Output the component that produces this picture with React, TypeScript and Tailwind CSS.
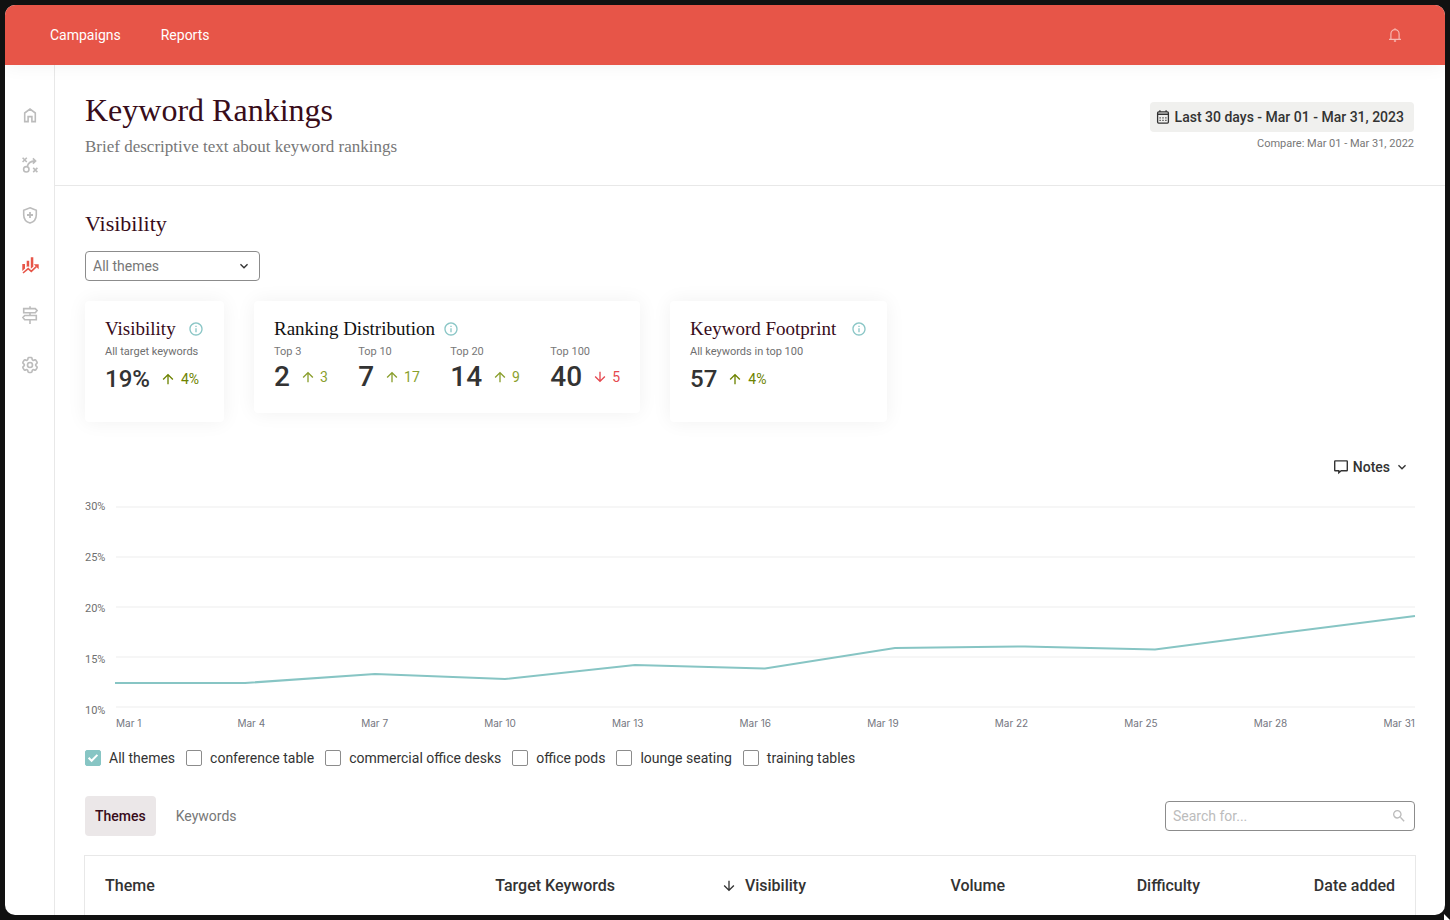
import React from 'react';
import {
  MdArrowDownward,
  MdArrowUpward,
  MdInfoOutline,
  MdKeyboardArrowDown,
  MdSearch,
} from 'react-icons/md';
import { HiOutlineCog6Tooth } from 'react-icons/hi2';

const SERIF = "font-['Liberation_Serif',serif]";

const HomeIcon = () => (
  <svg viewBox="0 0 20 20" className="h-5 w-5" fill="none" stroke="currentColor" strokeWidth="1.6">
    <path d="M4.7 16.6V8L10 4.1 15.3 8v8.6h-3.4v-5H8.1v5z" />
  </svg>
);

const TacticIcon = () => (
  <svg viewBox="0 0 20 20" className="h-5 w-5" fill="none" stroke="currentColor" strokeWidth="1.6">
    <path d="M2.6 2.8l4.2 4.2M6.8 2.8L2.6 7M13.2 12.9l4.2 4.2M17.4 12.9l-4.2 4.2" />
    <circle cx="6.3" cy="14.3" r="2.7" />
    <path d="M7.3 11.7c.6-3.3 3-5.6 7.9-5.8M12.9 3.3l2.7 2.6-2.7 2.7" />
  </svg>
);

const ShieldIcon = () => (
  <svg viewBox="0 0 20 20" className="h-5 w-5" fill="none" stroke="currentColor" strokeWidth="1.6">
    <path d="M10 2.8l6.3 2.4v4.6c0 3.9-2.6 7.2-6.3 8.3-3.7-1.1-6.3-4.4-6.3-8.3V5.2z" />
    <path d="M10 7v6M7 10h6" strokeWidth="1.8" />
  </svg>
);

const RankingsIcon = () => (
  <svg viewBox="0 0 20 20" className="h-5 w-5" fill="currentColor">
    <path d="M2.3 9H5v4.6l-2.7 2.3zM6.7 5.7h2.5v6.4l-1.3-.9-1.2 1zM10.8 2.2h2.5v9.6l-2.5 1.9z" />
    <path d="M3 18l5.2-4.4 3.1 2.8 5-4.7" fill="none" stroke="currentColor" strokeWidth="1.6" />
    <path d="M13.8 9.3h4.9v4.9z" />
  </svg>
);

const SignpostIcon = () => (
  <svg viewBox="0 0 20 20" className="h-5 w-5" fill="none" stroke="currentColor" strokeWidth="1.6">
    <path d="M10 1.2v2.4M10 7.7v2.8M10 14.7V19" />
    <path d="M3.7 3.6h11.6l1.8 2-1.8 2.1H3.7zM16.3 10.5H4.7l-1.8 2.1 1.8 2.1h11.6z" />
  </svg>
);

const BellIcon = () => (
  <svg viewBox="0 0 16 16" className="h-4 w-4" fill="none" stroke="currentColor" strokeWidth="1.2">
    <path d="M3.9 12.2V6.9C3.9 4.5 5.7 2.7 8 2.7s4.1 1.8 4.1 4.2v5.3M2 12.3h12M8 2.8V1.3" />
    <path d="M6.9 14.1h2.2" strokeWidth="1.5" />
  </svg>
);

const NoteIcon = () => (
  <svg viewBox="0 0 16 16" className="h-4 w-4" fill="none" stroke="currentColor" strokeWidth="1.4">
    <path d="M2.2 1.9h11.6c.3 0 .5.2.5.5v8.8c0 .3-.2.5-.5.5H8.2l-2.4 2v-2H2.2c-.3 0-.5-.2-.5-.5V2.4c0-.3.2-.5.5-.5z" />
  </svg>
);

const CalendarIcon = () => (
  <svg viewBox="0 0 16 16" className="h-4 w-4" fill="none" stroke="currentColor" strokeWidth="1.3">
    <rect x="2.6" y="2.9" width="10.8" height="11.2" rx="1" />
    <path d="M4.9 1.2v1.9M11.1 1.2v1.9" />
    <path d="M2.6 5.3h10.8" strokeWidth="1.6" />
    <path d="M4.5 8.8h7M4.5 11.4h7" strokeDasharray="1.2 1.7" />
  </svg>
);

const navItems = [
  { label: 'Home', icon: <HomeIcon /> },
  { label: 'Strategy', icon: <TacticIcon /> },
  { label: 'Site health', icon: <ShieldIcon /> },
  { label: 'Keyword rankings', icon: <RankingsIcon />, active: true },
  { label: 'Roadmap', icon: <SignpostIcon /> },
  { label: 'Settings', icon: <HiOutlineCog6Tooth size={20} className="stroke-2" /> },
];

const distribution = [
  { label: 'Top 3', value: 2, change: 3 },
  { label: 'Top 10', value: 7, change: 17 },
  { label: 'Top 20', value: 14, change: 9 },
  { label: 'Top 100', value: 40, change: -5 },
];

const yLabels = ['30%', '25%', '20%', '15%', '10%'];

// Chart space: 1300 wide, y grows downward, 0 = 30% and 200 = 10%
const series = [
  { date: 'Mar 1', y: 176 },
  { date: 'Mar 4', y: 176 },
  { date: 'Mar 7', y: 167 },
  { date: 'Mar 10', y: 172 },
  { date: 'Mar 13', y: 158 },
  { date: 'Mar 16', y: 161.5 },
  { date: 'Mar 19', y: 141 },
  { date: 'Mar 22', y: 139.5 },
  { date: 'Mar 25', y: 142.5 },
  { date: 'Mar 28', y: 125.5 },
  { date: 'Mar 31', y: 109 },
];

const themes = [
  'All themes',
  'conference table',
  'commercial office desks',
  'office pods',
  'lounge seating',
  'training tables',
];

const InfoButton = ({ label }: { label: string }) => (
  <button type="button" aria-label={label} className="text-[#8ac6c6]">
    <MdInfoOutline size={16} />
  </button>
);

interface StatCardProps {
  title: string;
  caption: string;
  value: string;
  change: string;
  className: string;
}

const StatCard: React.FC<StatCardProps> = ({ title, caption, value, change, className }) => (
  <div className={`rounded bg-white px-5 pt-4 pb-7 shadow-[0_0_20px_rgba(0,0,0,0.06)] ${className}`}>
    <div className="flex items-center justify-between">
      <h3 className={`${SERIF} text-[19px] leading-6 text-[#380c1a]`}>{title}</h3>
      <InfoButton label={`About ${title}`} />
    </div>
    <p className="mt-[3px] text-[11px] leading-4 whitespace-nowrap text-[#6f6f6f]">{caption}</p>
    <div className="mt-1 flex items-center">
      <span className="text-2xl leading-[30px] font-medium text-[#333]">{value}</span>
      <span className="ml-[10px] flex items-center gap-[5px] text-sm text-[#6d8300]">
        <MdArrowUpward size={16} />
        {change}
      </span>
    </div>
  </div>
);

const Sidebar: React.FC = () => (
  <nav className="flex w-[50px] shrink-0 flex-col gap-[30px] border-r border-[#e8e8e8] pt-10 pl-[15px]">
    {navItems.map((item) => (
      <a
        key={item.label}
        href="#"
        aria-label={item.label}
        className={item.active ? 'h-5 w-5 text-[#e75548]' : 'h-5 w-5 text-[#bcbcbc]'}
      >
        {item.icon}
      </a>
    ))}
  </nav>
);

const Chart: React.FC = () => {
  const points = series.map((p, i) => `${i * 130},${p.y}`).join(' ');
  return (
    <div className="mt-[22px] flex items-start gap-[10px]">
      <div className="flex h-[220px] w-5 flex-col justify-between text-[11px] leading-4 text-[#6f6f6f]">
        {yLabels.map((l) => (
          <span key={l}>{l}</span>
        ))}
      </div>
      <div className="min-w-0 flex-1 pt-2">
        <svg viewBox="0 0 1300 200" preserveAspectRatio="none" className="block h-[200px] w-full overflow-visible">
          {yLabels.map((l, i) => (
            <line key={l} x1="1" x2="1300" y1={i * 50} y2={i * 50} stroke="#f6f6f6" strokeWidth="2" />
          ))}
          <polyline
            points={points}
            fill="none"
            stroke="#87c5c4"
            strokeWidth="2"
            vectorEffect="non-scaling-stroke"
          />
        </svg>
        <div className="mt-2 flex justify-between pl-px font-['Inter',sans-serif] text-[10px] leading-4 text-[#747680]">
          {series.map((p) => (
            <span key={p.date}>{p.date}</span>
          ))}
        </div>
      </div>
    </div>
  );
};

const App: React.FC = () => {
  return (
    <div className="relative h-screen overflow-hidden bg-[#111] p-[5px] font-['Roboto',sans-serif] text-[#333]">
      <div className="flex h-full flex-col overflow-hidden rounded-[10px] bg-white">
        <header className="relative flex h-[60px] shrink-0 items-center justify-between bg-[#e75548] pr-[42px] pl-[45px] shadow-[0_0_20px_rgba(0,0,0,0.06)]">
          <nav className="flex gap-10 text-sm text-white">
            <a href="#">Campaigns</a>
            <a href="#">Reports</a>
          </nav>
          <button type="button" aria-label="Notifications" className="text-[#f6b9b2]">
            <BellIcon />
          </button>
        </header>

        <div className="flex min-h-0 flex-1">
          <Sidebar />

          <main className="min-w-0 flex-1">
            <div className="flex items-start justify-between border-b border-[#e8e8e8] pt-[25px] pr-[31px] pb-[27px] pl-[30px]">
              <div>
                <h1 className={`${SERIF} text-[32px] leading-10 text-[#380c1a]`}>Keyword Rankings</h1>
                <p className={`${SERIF} mt-1.5 text-[17px] leading-[22px] text-[#777]`}>
                  Brief descriptive text about keyword rankings
                </p>
              </div>
              <div className="flex flex-col items-end pt-3">
                <button
                  type="button"
                  className="flex h-[30px] items-center gap-1 rounded bg-[#f0f0ee] pr-[10px] pl-[5px] text-sm font-medium"
                >
                  <CalendarIcon />
                  Last 30 days - Mar 01 - Mar 31, 2023
                </button>
                <p className="mt-1 text-[11px] leading-4 text-[#777]">Compare: Mar 01 - Mar 31, 2022</p>
              </div>
            </div>

            <div className="px-[30px] pt-6">
              <h2 className={`${SERIF} text-[22px] leading-7 text-[#380c1a]`}>Visibility</h2>

              <div className="relative mt-[13px] w-[175px]">
                <select
                  aria-label="Theme filter"
                  className="block h-[30px] w-full appearance-none rounded border border-[#8c8c8c] bg-white px-[7px] text-sm text-[#777]"
                >
                  <option>All themes</option>
                </select>
                <MdKeyboardArrowDown size={16} className="pointer-events-none absolute top-[7px] right-2" />
              </div>

              <div className="mt-5 flex items-start gap-[30px]">
                <StatCard
                  title="Visibility"
                  caption="All target keywords"
                  value="19%"
                  change="4%"
                  className="w-[139px]"
                />

                <div className="w-[386px] rounded bg-white px-5 pt-4 pb-5 shadow-[0_0_20px_rgba(0,0,0,0.06)]">
                  <div className="flex items-center gap-2">
                    <h3 className={`${SERIF} text-[19px] leading-6 text-[#111]`}>Ranking Distribution</h3>
                    <InfoButton label="About ranking distribution" />
                  </div>
                  <div className="mt-[3px] flex justify-between">
                    {distribution.map((d) => (
                      <div key={d.label}>
                        <p className="text-[11px] leading-4 text-[#777]">{d.label}</p>
                        <div className="flex items-center">
                          <span className="text-[28px] leading-[33px] font-medium">{d.value}</span>
                          <span
                            className={`ml-[10px] flex items-center gap-1 text-sm ${
                              d.change < 0 ? 'text-[#e5484f]' : 'text-[#8a9f2d]'
                            }`}
                          >
                            {d.change < 0 ? <MdArrowDownward size={16} /> : <MdArrowUpward size={16} />}
                            {Math.abs(d.change)}
                          </span>
                        </div>
                      </div>
                    ))}
                  </div>
                </div>

                <StatCard
                  title="Keyword Footprint"
                  caption="All keywords in top 100"
                  value="57"
                  change="4%"
                  className="w-[217px]"
                />
              </div>

              <div className="mt-[35px] flex justify-end pr-[5px]">
                <button type="button" className="flex items-center gap-1 text-sm font-medium">
                  <NoteIcon />
                  Notes
                  <MdKeyboardArrowDown size={16} />
                </button>
              </div>

              <Chart />

              <div className="mt-[17px] flex gap-[11px]">
                {themes.map((t, i) => (
                  <label key={t} className="flex items-center gap-2 text-sm">
                    <span className="relative h-4 w-4">
                      <input
                        type="checkbox"
                        defaultChecked={i === 0}
                        className="peer block h-4 w-4 appearance-none rounded-xs border border-[#8c8c8c] checked:border-[#87c5c4] checked:bg-[#87c5c4]"
                      />
                      <svg
                        viewBox="0 0 16 16"
                        className="pointer-events-none absolute inset-0 hidden h-4 w-4 peer-checked:block"
                        fill="none"
                        stroke="#fff"
                        strokeWidth="2"
                      >
                        <path d="M3.6 7.8l3 3 5.8-5.9" />
                      </svg>
                    </span>
                    {t}
                  </label>
                ))}
              </div>

              <div className="mt-7 flex items-center justify-between">
                <div className="flex gap-[10px] text-sm">
                  <button type="button" className="h-10 rounded bg-[#ebe7e8] px-[10px] font-medium text-[#380c1a]">
                    Themes
                  </button>
                  <button type="button" className="h-10 px-[10px] text-[#777]">
                    Keywords
                  </button>
                </div>
                <div className="relative w-[250px]">
                  <input
                    type="text"
                    aria-label="Search"
                    placeholder="Search for..."
                    className="block h-[30px] w-full rounded border border-[#8c8c8c] pr-8 pl-[7px] text-sm placeholder:text-[#bcbcbc]"
                  />
                  <MdSearch size={16} className="absolute top-[7px] right-2 text-[#bcbcbc]" />
                </div>
              </div>

              <div className="-mx-px mt-[19px] border border-[#e8e8e8] pb-5">
                <table className="w-full table-fixed">
                  <thead>
                    <tr className="h-[60px] text-right text-base whitespace-nowrap">
                      <th className="pl-5 text-left font-medium">Theme</th>
                      <th className="w-[195px] pr-5 font-medium">Target Keywords</th>
                      <th className="w-[195px] pr-6 font-medium" aria-sort="descending">
                        <button type="button" className="inline-flex items-center gap-2 align-top">
                          <MdArrowDownward size={16} />
                          Visibility
                        </button>
                      </th>
                      <th className="w-[195px] pr-5 font-medium">Volume</th>
                      <th className="w-[195px] pr-5 font-medium">Difficulty</th>
                      <th className="w-[195px] pr-5 font-medium">Date added</th>
                    </tr>
                  </thead>
                </table>
              </div>
            </div>
          </main>
        </div>
      </div>

      {/* Mouse pointer peeking in at the window corner */}
      <svg viewBox="0 0 6 6" className="absolute right-0 bottom-0 h-[6px] w-[6px]" fill="#fff">
        <path d="M0 0l6 6H0z" />
      </svg>
    </div>
  );
};

export default App;
